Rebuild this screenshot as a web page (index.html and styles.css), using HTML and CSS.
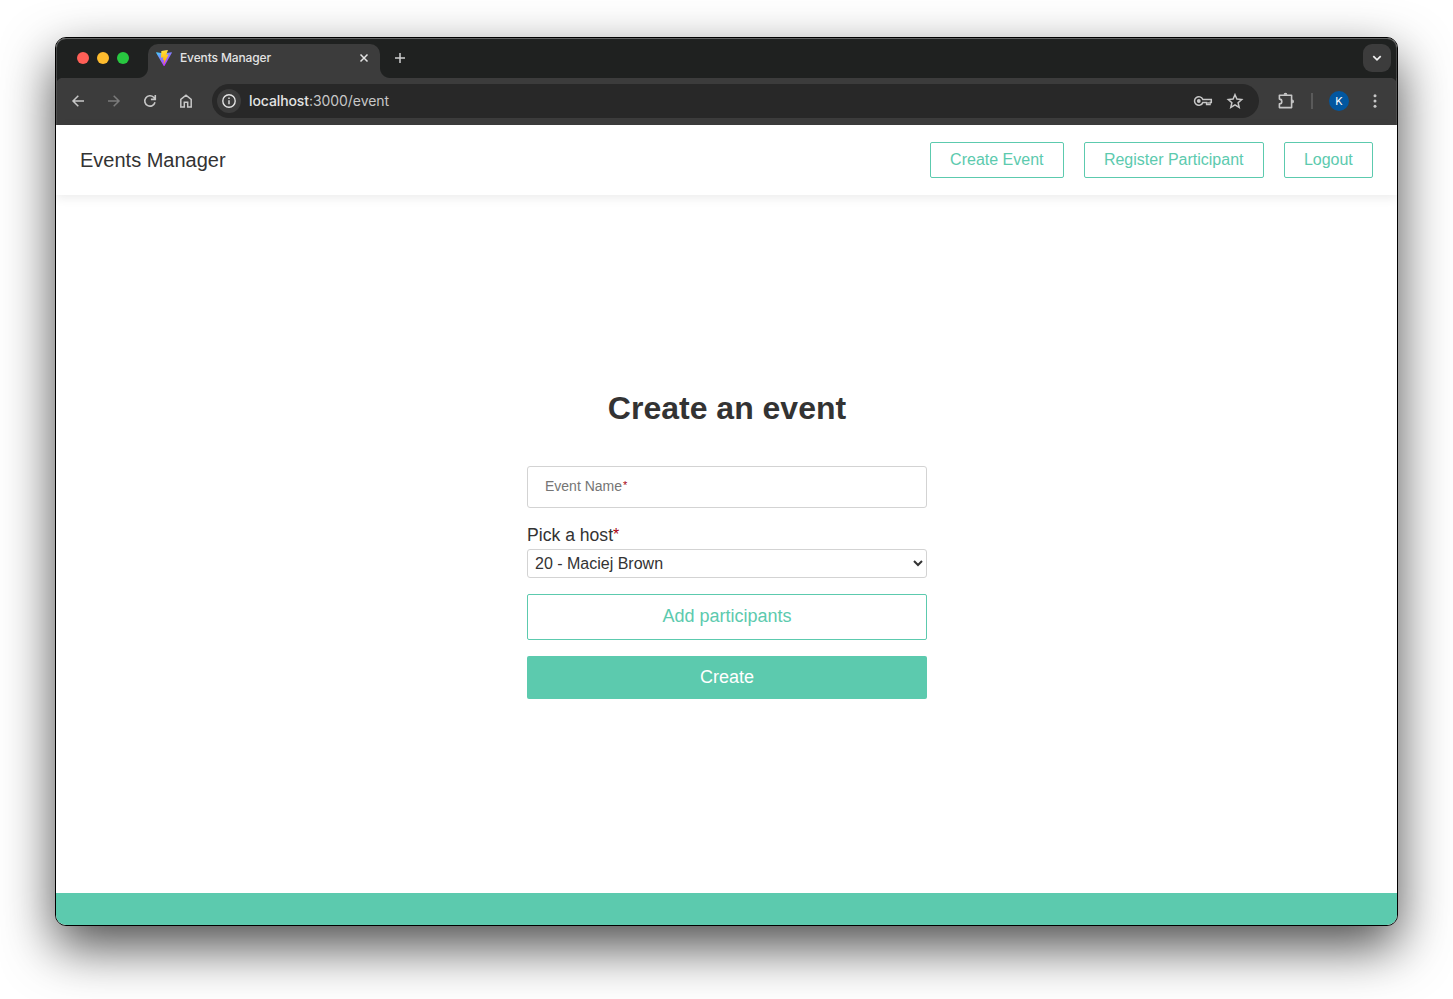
FILE: index.html
```html
<!DOCTYPE html>
<html lang="en">
<head>
<meta charset="utf-8">
<title>Events Manager</title>
<link rel="stylesheet" href="styles.css">
</head>
<body>
<div class="window">
  <div class="tabstrip">
    <div class="lights"><span class="light red"></span><span class="light yellow"></span><span class="light green"></span></div>
    <div class="tab">
      <svg class="favicon" width="16" height="16" viewBox="0 0 32 32">
        <defs>
          <linearGradient id="va" x1="0" y1="0" x2="0.6" y2="0.9"><stop offset="0" stop-color="#41d1ff"/><stop offset="1" stop-color="#bd34fe"/></linearGradient>
          <linearGradient id="vb" x1="0.4" y1="0" x2="0.5" y2="1"><stop offset="0" stop-color="#ffea83"/><stop offset="0.1" stop-color="#ffdd35"/><stop offset="1" stop-color="#ffa800"/></linearGradient>
        </defs>
        <path fill="url(#va)" d="M31.8 5.700 16.900 31.800c-.3.5-1.100.5-1.400 0L.2 5.700c-.3-.6.2-1.300.9-1.200L16 7.200l14.900-2.700c.7-.1 1.200.6.9 1.200z"/>
        <path fill="url(#vb)" d="M23 .1 11 2.200c-.2 0-.3.2-.3.400L10 15c0 .300.200.500.500.400l3.500-.700c.300-.100.600.200.500.500l-.900 4.500c-.1.300.2.600.5.500l1.900-.600c.3-.1.600.200.500.500l-1.400 7c-.1.400.5.700.7.300L25 9.500c.2-.3-.1-.7-.5-.6l-3.200.6c-.3.100-.6-.2-.5-.500l2.900-8.400c0-.300-.2-.600-.7-.500z"/>
      </svg>
      <span class="tab-title">Events Manager</span>
      <svg class="tab-close" width="16" height="16" viewBox="0 0 16 16"><path d="M4.500 4.500l7 7M11.500 4.500l-7 7" stroke="#e3e3e3" stroke-width="1.500"/></svg>
    </div>
    <svg class="newtab" width="12" height="12" viewBox="0 0 12 12"><path d="M6 1v10M1 6h10" stroke="#cfcfcf" stroke-width="1.500"/></svg>
    <div class="tabsearch"><svg width="10" height="10" viewBox="0 0 10 10"><path d="M1.300 3.200 5 6.900l3.700-3.700" fill="none" stroke="#f0f0f0" stroke-width="1.700"/></svg></div>
  </div>
  <div class="toolbar">
    <svg class="nav" width="20" height="20" viewBox="0 0 20 20"><path d="M16 10H5M10.300 4.700 5 10l5.300 5.300" fill="none" stroke="#c7c7c7" stroke-width="1.500"/></svg>
    <svg class="nav" width="20" height="20" viewBox="0 0 20 20"><path d="M4 10h11M9.700 4.700 15 10l-5.300 5.300" fill="none" stroke="#7b7b7b" stroke-width="1.500"/></svg>
    <svg class="nav" width="20" height="20" viewBox="0 0 20 20"><path d="M15 11.300A5.200 5.200 0 1 1 13.700 6.300L15.300 8M15.300 4v4.400h-4.400" fill="none" stroke="#c7c7c7" stroke-width="1.600"/></svg>
    <svg class="nav" width="20" height="20" viewBox="0 0 20 20"><path d="M4.800 16V8.300L10 4.200l5.200 4.100V16h-3.500v-4.800H8.300V16z" fill="none" stroke="#c7c7c7" stroke-width="1.500"/></svg>
    <div class="omnibox">
      <span class="site-info"><svg width="16" height="16" viewBox="0 0 16 16"><circle cx="8" cy="8" r="6.200" fill="none" stroke="#e3e3e3" stroke-width="1.400"/><path d="M8 7.300v4M8 4.500v1.500" stroke="#e3e3e3" stroke-width="1.400"/></svg></span>
      <span class="url"><b>localhost</b>:3000/event</span>
      <svg class="key" width="20" height="12" viewBox="0 0 20 12"><path d="M9.800 4.400A4.300 4.300 0 1 0 9.800 7.600H13.600V9.500H17V7.600H18.300V4.400z" fill="none" stroke="#c7c7c7" stroke-width="1.500"/><circle cx="5.800" cy="6" r="1.900" fill="#c7c7c7"/><path d="M14 7h3v2h-3z" fill="#999"/></svg>
      <svg width="18" height="18" viewBox="0 0 18 18"><path d="M9 2.700l1.900 4.400 4.800.4-3.600 3.200 1.100 4.700L9 12.900l-4.200 2.500 1.100-4.700-3.600-3.200 4.800-.4z" fill="none" stroke="#c7c7c7" stroke-width="1.500"/></svg>
    </div>
    <svg class="puzzle" width="20" height="20" viewBox="0 0 20 20"><path d="M3.400 4.200H15.600V16.600H3.400V12.900A2.400 2.400 0 0 0 3.400 8.100z" fill="none" stroke="#c7c7c7" stroke-width="1.600" stroke-linejoin="round"/><path d="M7.600 3.700a1.900 1.900 0 0 1 3.800 0zM16.100 8.500a1.900 1.900 0 0 1 0 3.800z" fill="#c7c7c7"/></svg>
    <span class="divider"></span>
    <span class="avatar">K</span>
    <svg class="menu" width="4" height="16" viewBox="0 0 4 16"><g fill="#c7c7c7"><circle cx="2" cy="2.800" r="1.500"/><circle cx="2" cy="8" r="1.500"/><circle cx="2" cy="13.200" r="1.500"/></g></svg>
  </div>
  <div class="page">
    <header class="header">
      <div class="brand">Events Manager</div>
      <nav class="links"><a class="link">Create Event</a><a class="link">Register Participant</a><a class="link">Logout</a></nav>
    </header>
    <main class="main">
      <h1 class="title">Create an event</h1>
      <form class="form">
        <label class="field">Event Name<span class="req">*</span></label>
        <label class="label" for="host">Pick a host<span class="req">*</span></label>
        <select class="select" id="host"><option>20 - Maciej Brown</option></select>
        <button class="btn outline" type="button">Add participants</button>
        <button class="btn solid" type="button">Create</button>
      </form>
    </main>
    <footer class="footer"></footer>
  </div>
</div>
</body>
</html>
```
FILE: styles.css
```css
* { box-sizing: border-box; }
body {
  margin: 0;
  height: 999px;
  padding: 37px 55px 73px;
  overflow: hidden;
  background: #fff;
  font-family: "Liberation Sans", Arial, sans-serif;
  color: #333;
}
svg { display: block; flex: none; }
.window {
  height: 889px;
  border: 1px solid #000;
  border-radius: 11px;
  overflow: hidden;
  display: flex;
  flex-direction: column;
  background: #fff;
  box-shadow: 0 21px 52px rgba(0, 0, 0, .7);
}
.tabstrip {
  height: 40px;
  flex: none;
  display: flex;
  align-items: center;
  background: #1f2120;
  box-shadow: inset 0 1px #626363, inset 1px 0 #444545, inset -1px 0 #444545;
  border-radius: 10px 10px 0 0;
  padding: 0 6px 0 21px;
}
.lights { display: flex; gap: 8px; width: 71px; }
.light { width: 12px; height: 12px; border-radius: 50%; }
.red { background: #ff5f57; }
.yellow { background: #febc2e; }
.green { background: #28c840; }
.tab {
  position: relative;
  align-self: flex-end;
  width: 232px;
  height: 34px;
  padding: 0 8px 6px;
  display: flex;
  align-items: center;
  background: #3c3c3c;
  border-radius: 10px 10px 0 0;
}
.tab::before, .tab::after {
  content: "";
  position: absolute;
  bottom: 0;
  width: 10px;
  height: 10px;
}
.tab::before { left: -10px; background: radial-gradient(circle at 0 0, transparent 9.500px, #3c3c3c 10.500px); }
.tab::after { right: -10px; background: radial-gradient(circle at 100% 0, transparent 9.500px, #3c3c3c 10.500px); }
.tab-title { flex: 1; margin-left: 8px; padding-bottom: 2px; font: 500 12px Inter, sans-serif; letter-spacing: -.13px; color: #e3e3e3; white-space: nowrap; }
.newtab { margin-left: 14px; }
.tabsearch {
  margin-left: auto;
  width: 28px;
  height: 28px;
  border-radius: 9px;
  background: #3c3c3c;
  display: flex;
  align-items: center;
  justify-content: center;
}
.toolbar {
  height: 47px;
  flex: none;
  display: flex;
  align-items: center;
  padding: 0 20px 2px 12px;
  background: radial-gradient(circle at 8px 8px, #3c3c3c 8px, #1f2120 9px) 0 0 / 8px 8px no-repeat, radial-gradient(circle at 0 8px, #3c3c3c 8px, #1f2120 9px) 100% 0 / 8px 8px no-repeat, linear-gradient(#3c3c3c, #3c3c3c) 8px 0 / calc(100% - 16px) 8px no-repeat, linear-gradient(#3c3c3c, #3c3c3c) 0 8px / 100% 100% no-repeat;
  box-shadow: inset 1px 0 #4f4f4f, inset -1px 0 #4f4f4f;
}
.nav { margin-right: 16px; }
.omnibox {
  flex: none;
  width: 1047px;
  height: 34px;
  border-radius: 17px;
  background: #282828;
  display: flex;
  align-items: center;
  padding: 0 15px 0 5px;
}
.site-info { width: 24px; height: 24px; border-radius: 50%; background: #3c3c3c; display: flex; align-items: center; justify-content: center; }
.url { flex: 1; margin-left: 8px; font: 400 14px Inter, sans-serif; letter-spacing: -.06px; color: #c7c7c7; }
.url b { font-weight: 500; letter-spacing: -.1px; color: #e3e3e3; }
.key { margin-right: 13px; }
.puzzle { margin-left: 17px; }
.divider { width: 2px; height: 16px; background: #5a5a5a; margin-left: 15px; }
.avatar {
  width: 20px;
  height: 20px;
  margin-left: 16px;
  border-radius: 50%;
  background: #0257a0;
  color: #fff;
  font: 400 11px/20px Inter, sans-serif;
  text-align: center;
}
.menu { margin-left: auto; }
.page { flex: 1; display: flex; flex-direction: column; }
.header {
  height: 70px;
  padding: 0 24px;
  display: flex;
  align-items: center;
  justify-content: space-between;
  box-shadow: 0 3px 10px rgba(0, 0, 0, .08);
}
.brand { font-size: 20px; }
.links { display: flex; gap: 20px; }
.link {
  height: 36px;
  padding: 0 19.200px;
  border: 1px solid #5ccaae;
  border-radius: 2px;
  color: #5ccaae;
  font-size: 16px;
  line-height: 33px;
}
.main { flex: 1; display: flex; flex-direction: column; align-items: center; padding: 195px 0 0 1px; }
.title { margin: 0 0 39px; font-size: 32px; line-height: 37px; }
.form { width: 400px; display: flex; flex-direction: column; }
.field {
  height: 42px;
  margin-bottom: 17px;
  padding: 0 17px;
  border: 1px solid #d3d3d3;
  border-radius: 3px;
  font-size: 14px;
  line-height: 39px;
  color: #757575;
}
.req { color: #a80010; }
.field .req { font-size: 11px; vertical-align: 2px; line-height: 1; margin-left: 1px; }
.label { font-size: 17.600px; line-height: 20px; margin-bottom: 4px; }
.label .req { font-size: 16px; vertical-align: 1px; line-height: 1; }
.select {
  height: 29px;
  margin-bottom: 16px;
  padding: 0 0 0 3px;
  border: 1px solid #d3d3d3;
  border-radius: 3px;
  background-color: #fff;
  color: #333;
  font: 16px "Liberation Sans", Arial, sans-serif;
}
.btn { border-radius: 2px; font: 18px "Liberation Sans", Arial, sans-serif; padding: 0 0 2px; }
.outline { height: 46px; margin-bottom: 16px; border: 1px solid #5ccaae; background: #fff; color: #5ccaae; }
.solid { height: 43px; padding-bottom: 0; border: 0; background: #5ccaae; color: #fff; }
.footer { height: 32px; background: #5ccaae; }
```
